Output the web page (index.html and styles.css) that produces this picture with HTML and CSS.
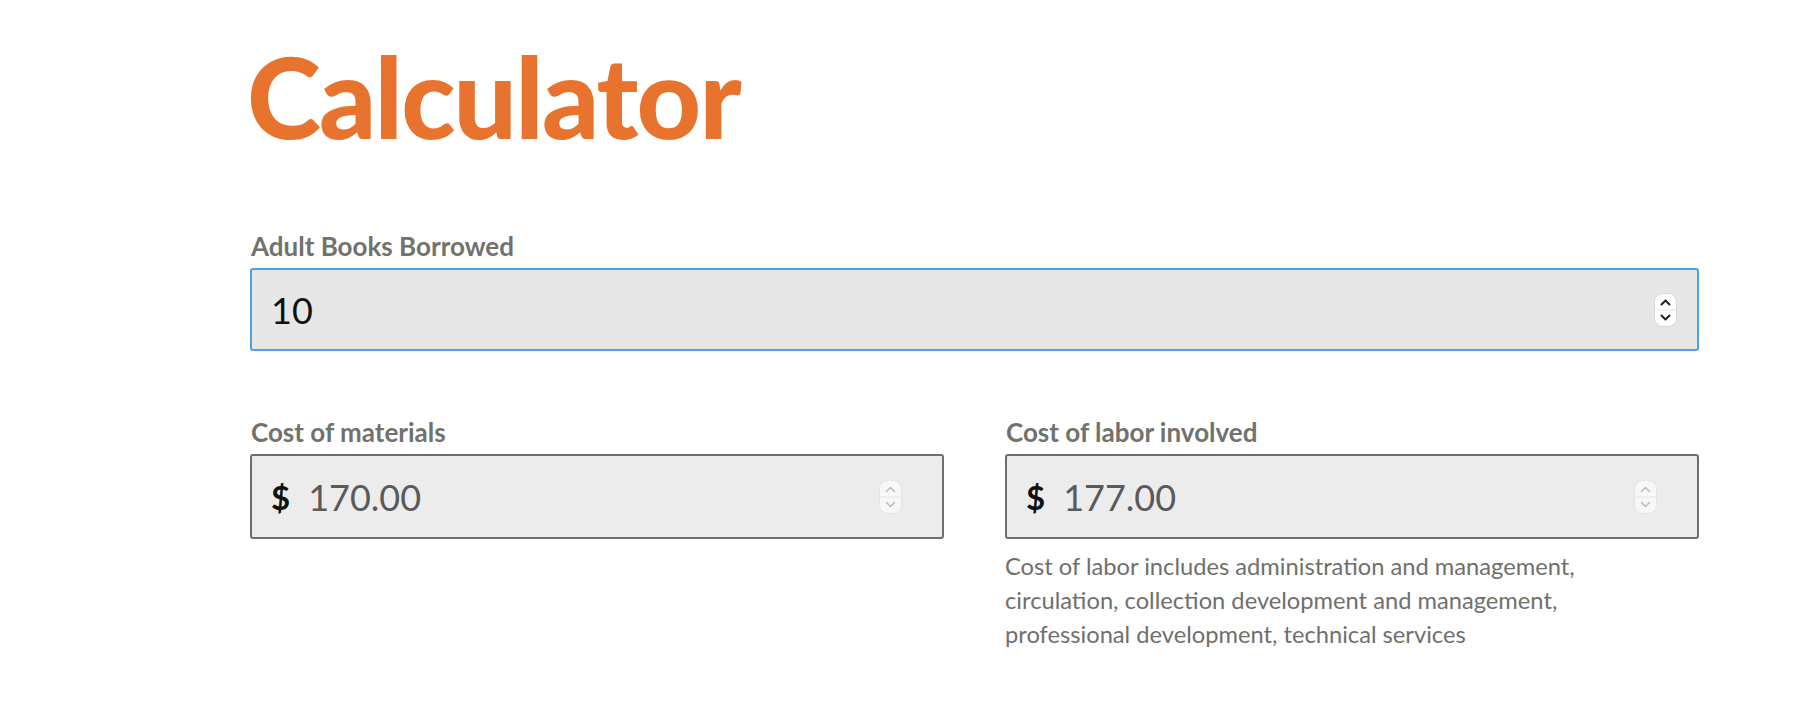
FILE: index.html
```html
<!DOCTYPE html>
<html lang="en">
  <head>
    <meta charset="utf-8" />
    <title>Calculator</title>
    <link rel="stylesheet" href="styles.css">
  </head>

  <body>
    <main class="calculator">
      <h1 class="title">Calculator</h1>

      <div class="field">
        <label class="field-label" for="adult-books">Adult Books Borrowed</label>
        <div class="input-box input-focus">
          <input class="input-value input-dark" id="adult-books" type="text" value="10">
          <span class="spinner">
            <svg width="23" height="34" viewBox="0 0 23 34">
              <rect x="0.5" y="0.5" width="22" height="33" rx="8" fill="#fff" stroke="#d6d6d6"/>
              <line x1="1" y1="17" x2="22" y2="17" stroke="#e2e2e2"/>
              <path d="M7.5 11.5 L11.5 7.5 L15.5 11.5" fill="none" stroke="#222" stroke-width="2" stroke-linecap="round" stroke-linejoin="round"/>
              <path d="M7.5 22.5 L11.5 26.5 L15.5 22.5" fill="none" stroke="#222" stroke-width="2" stroke-linecap="round" stroke-linejoin="round"/>
            </svg>
          </span>
        </div>
      </div>

      <div class="field-row">
        <div class="field">
          <label class="field-label" for="cost-materials">Cost of materials</label>
          <div class="input-box input-readonly">
            <span class="currency">$</span>
            <input class="input-value" id="cost-materials" type="text" value="170.00" readonly>
            <span class="spinner spinner-off">
              <svg width="23" height="34" viewBox="0 0 23 34">
                <rect x="0.5" y="0.5" width="22" height="33" rx="8" fill="#f7f7f7" stroke="#e4e4e4"/>
                <line x1="1" y1="17" x2="22" y2="17" stroke="#e4e4e4"/>
                <path d="M7.5 11.5 L11.5 7.5 L15.5 11.5" fill="none" stroke="#bdbdbd" stroke-width="1.6" stroke-linecap="round" stroke-linejoin="round"/>
                <path d="M7.5 22.5 L11.5 26.5 L15.5 22.5" fill="none" stroke="#bdbdbd" stroke-width="1.6" stroke-linecap="round" stroke-linejoin="round"/>
              </svg>
            </span>
          </div>
        </div>

        <div class="field">
          <label class="field-label" for="cost-labor">Cost of labor involved</label>
          <div class="input-box input-readonly">
            <span class="currency">$</span>
            <input class="input-value" id="cost-labor" type="text" value="177.00" readonly>
            <span class="spinner spinner-off">
              <svg width="23" height="34" viewBox="0 0 23 34">
                <rect x="0.5" y="0.5" width="22" height="33" rx="8" fill="#f7f7f7" stroke="#e4e4e4"/>
                <line x1="1" y1="17" x2="22" y2="17" stroke="#e4e4e4"/>
                <path d="M7.5 11.5 L11.5 7.5 L15.5 11.5" fill="none" stroke="#bdbdbd" stroke-width="1.6" stroke-linecap="round" stroke-linejoin="round"/>
                <path d="M7.5 22.5 L11.5 26.5 L15.5 22.5" fill="none" stroke="#bdbdbd" stroke-width="1.6" stroke-linecap="round" stroke-linejoin="round"/>
              </svg>
            </span>
          </div>
          <p class="field-help">Cost of labor includes administration and management, circulation, collection development and management, professional development, technical services</p>
        </div>
      </div>
    </main>
  </body>
</html>
```

FILE: styles.css
```css
body {
  margin: 0;
  font-family: 'Lato', 'Liberation Sans', sans-serif;
  background-color: #fff;
  color: #333;
}

.calculator {
  width: 1449px;
  margin-left: 250px;
}

.title {
  font-size: 112px;
  font-weight: 900;
  line-height: 1;
  letter-spacing: -1.8px;
  color: #e8732e;
  margin: 40px 0 80px -3px;
}

.field {
  display: flex;
  flex-direction: column;
}

.field-label {
  font-size: 26px;
  font-weight: 700;
  line-height: 28px;
  color: #72726c;
  margin-bottom: 8px;
  padding-left: 1px;
}

.field-row {
  display: grid;
  grid-template-columns: 1fr 1fr;
  column-gap: 61px;
  margin-top: 67px;
}

.input-box {
  display: flex;
  align-items: center;
  height: 85px;
  box-sizing: border-box;
  border-radius: 3px;
  padding: 0 20px 0 19px;
}

.input-focus {
  height: 83px;
  background-color: #e6e6e6;
  border: 2px solid #4aa3df;
}

.input-readonly {
  background-color: #ececec;
  border: 2px solid #6e6e6c;
  padding-right: 40px;
}

.input-value {
  flex: 1;
  min-width: 0;
  border: none;
  background: transparent;
  outline: none;
  padding: 0;
  font-family: inherit;
  font-size: 36px;
  color: #5a5a5a;
}

.input-dark {
  color: #111;
}

.currency {
  font-size: 33px;
  font-weight: 700;
  color: #111;
  margin-right: 18px;
}

.spinner {
  display: flex;
}

.field-help {
  margin: 10px 0 0;
  font-size: 23.7px;
  line-height: 34px;
  color: #6f6f6c;
  max-width: 600px;
}
```
